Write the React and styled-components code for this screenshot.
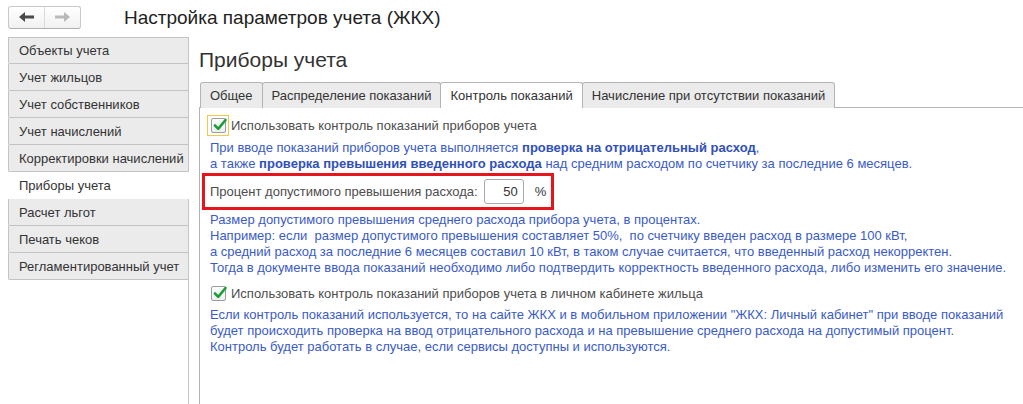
import React, { useState } from 'react';
import styled, { createGlobalStyle } from 'styled-components';

const GlobalStyle = createGlobalStyle`
  html, body {
    margin: 0;
    padding: 0;
    background: #fff;
  }
  body {
    font-family: 'Liberation Sans', Arial, sans-serif;
    font-size: 13px;
    color: #333;
  }
`;

const Page = styled('div')`
  width: 1023px;
  height: 404px;
  overflow: hidden;
  display: flex;
  flex-direction: column;
`;

const TopBar = styled('div')`
  height: 37px;
  display: flex;
  align-items: center;
  padding-left: 8px;
  box-sizing: border-box;
`;

const NavGroup = styled('div')`
  display: flex;
  width: 73px;
  height: 23px;
  margin-top: -3px;
  box-sizing: border-box;
  border: 1px solid #c8c8c8;
  border-bottom-color: #b0b0b0;
  border-radius: 3px;
  background: linear-gradient(#ffffff, #f1f1f1);
`;

const NavButton = styled('div')`
  flex: 1;
  display: flex;
  align-items: center;
  justify-content: center;
  & + & {
    border-left: 1px solid #dadada;
  }
`;

const Title = styled('div')`
  margin-left: 43px;
  margin-top: -2px;
  font-size: 19px;
  color: #222;
`;

const Body = styled('div')`
  flex: 1;
  display: flex;
`;

const Sidebar = styled('div')`
  width: 181px;
  margin-left: 8px;
  border-right: 1px solid #c4c4c4;
  display: flex;
  flex-direction: column;
  box-sizing: border-box;
`;

const SideItem = styled('div')`
  height: 27px;
  box-sizing: border-box;
  padding-left: 10px;
  display: flex;
  align-items: center;
  font-size: 13px;
  color: #333;
  background: ${p => (p.active ? '#fff' : '#ebebeb')};
  border-left: 1px solid ${p => (p.active ? '#fff' : '#c4c4c4')};
  border-bottom: 1px solid ${p => (p.active ? '#fff' : '#c4c4c4')};
  border-top: ${p => (p.first ? '1px solid #c4c4c4' : '0')};
  border-bottom-left-radius: 2px;
  margin-right: ${p => (p.active ? '-1px' : '0')};
  cursor: pointer;
`;

const Content = styled('div')`
  flex: 1;
  display: flex;
  flex-direction: column;
  padding-left: 10px;
`;

const Heading = styled('div')`
  font-size: 21px;
  color: #333;
  margin-top: 10px;
  height: 35px;
  line-height: 25px;
`;

const TabBar = styled('div')`
  display: flex;
  border-bottom: 1px solid #b4b4b4;
  padding-left: 1px;
  height: 26px;
  box-sizing: border-box;
`;

const Tab = styled('div')`
  height: 26px;
  box-sizing: border-box;
  padding: 0 9px;
  display: flex;
  align-items: center;
  border: 1px solid #b4b4b4;
  border-bottom: 0;
  margin-left: -1px;
  border-radius: 3px 3px 0 0;
  background: ${p => (p.active ? '#fff' : '#ebebeb')};
  color: #333;
  font-size: 13px;
  cursor: pointer;
  &:first-child {
    margin-left: 0;
  }
`;

const Panel = styled('div')`
  flex: 1;
  border-left: 1px solid #b4b4b4;
  padding: 7px 0 0 10px;
  display: flex;
  flex-direction: column;
`;

const CheckRow = styled('label')`
  display: flex;
  align-items: center;
  height: 21px;
  color: #4d4d4d;
  font-size: 13px;
  cursor: pointer;
`;

const CheckFocus = styled('span')`
  width: ${p => (p.focused ? '22px' : '16px')};
  height: 21px;
  box-sizing: border-box;
  margin-left: ${p => (p.focused ? '-3px' : '0')};
  margin-right: ${p => (p.focused ? '2px' : '5px')};
  border: 1px solid ${p => (p.focused ? '#f1c94a' : 'transparent')};
  display: flex;
  align-items: center;
  justify-content: center;
`;

const CheckBox = styled('span')`
  width: 15px;
  height: 15px;
  box-sizing: border-box;
  border: 1px solid #9c9c9c;
  border-radius: 2px;
  background: linear-gradient(#fdfdfd, #f0f0f0);
  position: relative;
  display: block;
  flex: none;
`;

const CheckMark = styled('svg')`
  position: absolute;
  left: 1px;
  top: -1px;
`;

const Note = styled('div')`
  color: #3a5bc7;
  font-size: 13px;
  line-height: 16px;
  margin: ${p => p.m || '0'};
  white-space: nowrap;
  b {
    color: #2f50b8;
  }
`;

const Highlight = styled('div')`
  margin: 1px 0 1px -8px;
  width: 352px;
  height: 37px;
  box-sizing: border-box;
  border: 3px solid #e8141b;
  padding-left: 5px;
  display: flex;
  align-items: center;
`;

const FieldLabel = styled('span')`
  color: #4d4d4d;
  font-size: 13px;
`;

const NumberInput = styled('input')`
  width: 40px;
  height: 25px;
  box-sizing: border-box;
  margin-left: 6px;
  border: 1px solid #a9a9a9;
  border-radius: 3px;
  text-align: right;
  padding: 0 5px 0 0;
  font-family: 'Liberation Sans', Arial, sans-serif;
  font-size: 13px;
  color: #333;
  outline: none;
`;

const Unit = styled('span')`
  margin-left: 11px;
  color: #333;
  font-size: 13px;
`;

const Spacer = styled('div')`
  height: ${p => p.h}px;
`;

const ArrowLeft = ({ color }) => (
  <svg width="15" height="10" viewBox="0 0 15 10">
    <path d="M0 5 L6 0 L6 3.5 L15 3.5 L15 6.5 L6 6.5 L6 10 Z" fill={color} />
  </svg>
);

const ArrowRight = ({ color }) => (
  <svg width="15" height="10" viewBox="0 0 15 10">
    <path d="M15 5 L9 0 L9 3.5 L0 3.5 L0 6.5 L9 6.5 L9 10 Z" fill={color} />
  </svg>
);

const Check = ({ checked, focused, onToggle, children }) => (
  <CheckRow onClick={onToggle}>
    <CheckFocus focused={focused}>
      <CheckBox>
        {checked && (
          <CheckMark width="14" height="14" viewBox="0 0 14 14">
            <path
              d="M2 7.5 L5.2 10.8 L12.5 2"
              fill="none"
              stroke="#1f9d3c"
              strokeWidth="2.6"
              strokeLinecap="round"
              strokeLinejoin="round"
            />
          </CheckMark>
        )}
      </CheckBox>
    </CheckFocus>
    {children}
  </CheckRow>
);

const sections = [
  'Объекты учета',
  'Учет жильцов',
  'Учет собственников',
  'Учет начислений',
  'Корректировки начислений',
  'Приборы учета',
  'Расчет льгот',
  'Печать чеков',
  'Регламентированный учет',
];

const tabs = [
  'Общее',
  'Распределение показаний',
  'Контроль показаний',
  'Начисление при отсутствии показаний',
];

export default () => {
  const [section, setSection] = useState('Приборы учета');
  const [tab, setTab] = useState('Контроль показаний');
  const [control, setControl] = useState(true);
  const [cabinet, setCabinet] = useState(true);
  const [percent, setPercent] = useState('50');

  return (
    <Page>
      <GlobalStyle />
      <TopBar>
        <NavGroup>
          <NavButton>
            <ArrowLeft color="#4a4a4a" />
          </NavButton>
          <NavButton>
            <ArrowRight color="#b9b9b9" />
          </NavButton>
        </NavGroup>
        <Title>Настройка параметров учета (ЖКХ)</Title>
      </TopBar>
      <Body>
        <Sidebar>
          {sections.map((s, i) => (
            <SideItem
              key={s}
              first={i === 0}
              active={s === section}
              onClick={() => setSection(s)}
            >
              {s}
            </SideItem>
          ))}
        </Sidebar>
        <Content>
          <Heading>Приборы учета</Heading>
          <TabBar>
            {tabs.map(t => (
              <Tab key={t} active={t === tab} onClick={() => setTab(t)}>
                {t}
              </Tab>
            ))}
          </TabBar>
          <Panel>
            <Check checked={control} focused onToggle={() => setControl(!control)}>
              Использовать контроль показаний приборов учета
            </Check>
            <Note m="4px 0 0 0">
              При вводе показаний приборов учета выполняется <b>проверка на отрицательный расход</b>,
              <br />а также <b>проверка превышения введенного расхода</b> над средним расходом по
              счетчику за последние 6 месяцев.
            </Note>
            <Highlight>
              <FieldLabel>Процент допустимого превышения расхода:</FieldLabel>
              <NumberInput value={percent} onChange={e => setPercent(e.target.value)} />
              <Unit>%</Unit>
            </Highlight>
            <Note m="1px 0 0 0">
              Размер допустимого превышения среднего расхода прибора учета, в процентах.
              <br />
              Например: если&nbsp; размер допустимого превышения составляет 50%,&nbsp; по счетчику
              введен расход в размере 100 кВт,
              <br />а средний расход за последние 6 месяцев составил 10 кВт, в таком случае
              считается, что введенный расход некорректен.
              <br />
              Тогда в документе ввода показаний необходимо либо подтвердить корректность введенного
              расхода, либо изменить его значение.
            </Note>
            <Spacer h={7} />
            <Check checked={cabinet} onToggle={() => setCabinet(!cabinet)}>
              Использовать контроль показаний приборов учета в личном кабинете жильца
            </Check>
            <Note m="3px 0 0 0">
              Если контроль показаний используется, то на сайте ЖКХ и в мобильном приложении "ЖКХ:
              Личный кабинет" при вводе показаний
              <br />
              будет происходить проверка на ввод отрицательного расхода и на превышение среднего
              расхода на допустимый процент.
              <br />
              Контроль будет работать в случае, если сервисы доступны и используются.
            </Note>
          </Panel>
        </Content>
      </Body>
    </Page>
  );
};
